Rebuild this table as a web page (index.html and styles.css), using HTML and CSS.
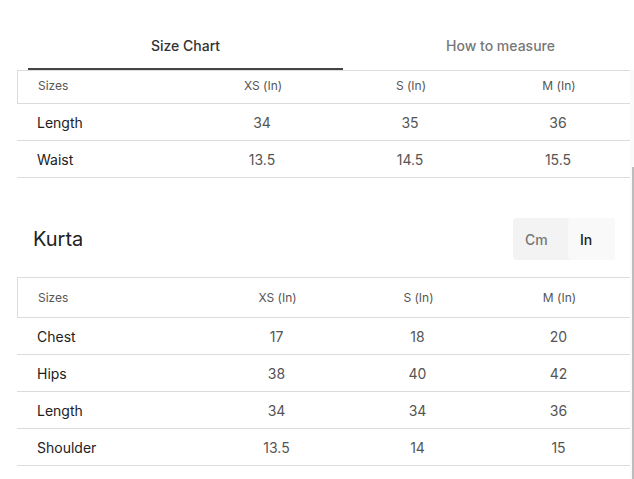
FILE: index.html
```html
<!DOCTYPE html>
<html>
<head>
<meta charset="utf-8">
<link rel="stylesheet" href="styles.css">
</head>
<body>
<div class="modal">
  <div class="tabs">
    <div class="tab active">Size Chart</div>
    <div class="tab">How to measure</div>
  </div>
  <div class="scroll">
    <div class="content">
      <div class="table t1">
        <div class="row head"><div class="c first">Sizes</div><div class="c">XS (In)</div><div class="c">S (In)</div><div class="c">M (In)</div></div>
        <div class="row"><div class="c first">Length</div><div class="c">34</div><div class="c">35</div><div class="c">36</div></div>
        <div class="row"><div class="c first">Waist</div><div class="c">13.5</div><div class="c">14.5</div><div class="c">15.5</div></div>
      </div>
      <div class="section-head">
        <h2 class="title">Kurta</h2>
        <div class="toggle"><span class="opt cm">Cm</span><span class="opt in">In</span></div>
      </div>
      <div class="table t2">
        <div class="row head tall"><div class="c first">Sizes</div><div class="c">XS (In)</div><div class="c">S (In)</div><div class="c">M (In)</div></div>
        <div class="row"><div class="c first">Chest</div><div class="c">17</div><div class="c">18</div><div class="c">20</div></div>
        <div class="row"><div class="c first">Hips</div><div class="c">38</div><div class="c">40</div><div class="c">42</div></div>
        <div class="row"><div class="c first">Length</div><div class="c">34</div><div class="c">34</div><div class="c">36</div></div>
        <div class="row"><div class="c first">Shoulder</div><div class="c">13.5</div><div class="c">14</div><div class="c">15</div></div>
        <div class="row"><div class="c first">Waist</div><div class="c">40</div><div class="c">42.5</div><div class="c">45.5</div></div>
      </div>
    </div>
    <div class="scrollbar"><div class="thumb"></div></div>
  </div>
</div>
</body>
</html>
```
FILE: styles.css
```css
* { box-sizing: border-box; }
html, body { margin: 0; padding: 0; background: #fff; }
body {
  font-family: Inter, "Noto Sans", sans-serif;
  color: #333;
  width: 634px;
  height: 479px;
  overflow: hidden;
}
.modal { width: 634px; height: 479px; display: flex; flex-direction: column; }
.tabs {
  height: 70px;
  display: flex;
  padding-left: 28px;
  overflow: hidden;
  flex: none;
}
.tab {
  flex: none;
  width: 315px;
  height: 70px;
  display: flex;
  align-items: center;
  justify-content: center;
  padding-top: 24px;
  padding-bottom: 2px;
  font-size: 14px;
  font-weight: 500;
  color: #777;
  border-bottom: 2px solid transparent;
}
.tab.active { color: #333; border-bottom-color: #444; }
.scroll { flex: 1; display: flex; overflow: hidden; }
.content { width: 630px; padding-left: 17px; overflow: hidden; flex: none; }
.scrollbar {
  width: 4px;
  background: #fafafa;
  padding-top: 97px;
  display: flex;
  justify-content: flex-end;
}
.thumb { width: 2px; height: 100%; background: #bdbdbd; }
.table { width: 613px; }
.row {
  display: grid;
  height: 37px;
  border-bottom: 1px solid #dcdcdc;
  align-items: center;
  font-size: 14px;
}
.t1 .row { grid-template-columns: 171px 148px 148px 148px; }
.t2 .row { grid-template-columns: 189px 141px 141px 141px; }
.row.head {
  height: 34px;
  padding-bottom: 3px;
  border-top: 1px solid #dcdcdc;
  border-left: 1px solid #dcdcdc;
  font-size: 12px;
  color: #555;
}
.row.head.tall { height: 41px; padding-bottom: 1px; }
.c { text-align: center; color: #555; white-space: nowrap; }
.c.first { text-align: left; padding-left: 20px; color: #222; font-weight: 400; }
.head .c.first { color: #555; }
.section-head {
  display: flex;
  align-items: center;
  justify-content: space-between;
  margin-top: 40px;
  margin-bottom: 17px;
  padding-left: 16px;
  padding-right: 15px;
  height: 42px;
}
.title { margin: 0; font-size: 20px; font-weight: 400; color: #222; }
.toggle {
  display: flex;
  height: 42px;
  background: #f3f3f3;
  border-radius: 4px;
  overflow: hidden;
}
.opt {
  display: flex;
  align-items: center;
  padding-left: 12px;
  font-size: 14px;
  font-weight: 500;
}
.opt.cm { width: 55px; color: #777; }
.opt.in { width: 47px; color: #222; background: #f9f9f9; border-radius: 4px; }
```
